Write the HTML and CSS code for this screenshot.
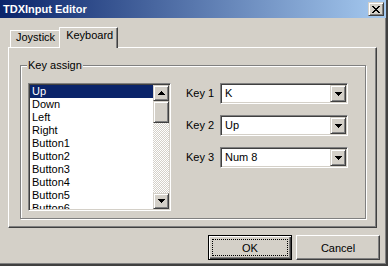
FILE: index.html
```html
<!DOCTYPE html>
<html>
<head>
  <title>TDXInput Editor</title>
  <link rel="stylesheet" href="styles.css">
</head>
<body>
  <div class="window">
    <div class="titlebar">
      <span class="title">TDXInput Editor</span>
      <button class="close-btn raised" title="Close">
        <svg width="8" height="7" viewBox="0 0 8 7">
          <path d="M0 0h2v1H0z M6 0h2v1H6z M1 1h2v1H1z M5 1h2v1H5z M2 2h4v1H2z M3 3h2v1H3z M2 4h4v1H2z M1 5h2v1H1z M5 5h2v1H5z M0 6h2v1H0z M6 6h2v1H6z" fill="#000"/>
        </svg>
      </button>
    </div>

    <div class="client">
      <!-- tab strip -->
      <div class="tabs">
        <div class="tab">Joystick</div>
        <div class="tab active">Keyboard</div>
      </div>

      <div class="tab-page">
        <fieldset class="group">
          <legend>Key assign</legend>
          <div class="group-body">
            <div class="listbox sunken">
              <ul class="list-items">
                <li class="selected">Up</li>
                <li>Down</li>
                <li>Left</li>
                <li>Right</li>
                <li>Button1</li>
                <li>Button2</li>
                <li>Button3</li>
                <li>Button4</li>
                <li>Button5</li>
                <li>Button6</li>
              </ul>
              <div class="scrollbar">
                <div class="scroll-btn raised">
                  <svg width="7" height="4" viewBox="0 0 7 4"><path d="M3 0h1v1H3z M2 1h3v1H2z M1 2h5v1H1z M0 3h7v1H0z" fill="#000"/></svg>
                </div>
                <div class="scroll-thumb raised"></div>
                <div class="scroll-track"></div>
                <div class="scroll-btn raised">
                  <svg width="7" height="4" viewBox="0 0 7 4"><path d="M0 0h7v1H0z M1 1h5v1H1z M2 2h3v1H2z M3 3h1v1H3z" fill="#000"/></svg>
                </div>
              </div>
            </div>

            <div class="key-list">
              <div class="key-row">
                <label>Key 1</label>
                <div class="combo sunken">
                  <span class="combo-value">K</span>
                  <span class="combo-btn raised">
                    <svg width="7" height="4" viewBox="0 0 7 4"><path d="M0 0h7v1H0z M1 1h5v1H1z M2 2h3v1H2z M3 3h1v1H3z" fill="#000"/></svg>
                  </span>
                </div>
              </div>
              <div class="key-row">
                <label>Key 2</label>
                <div class="combo sunken">
                  <span class="combo-value">Up</span>
                  <span class="combo-btn raised">
                    <svg width="7" height="4" viewBox="0 0 7 4"><path d="M0 0h7v1H0z M1 1h5v1H1z M2 2h3v1H2z M3 3h1v1H3z" fill="#000"/></svg>
                  </span>
                </div>
              </div>
              <div class="key-row">
                <label>Key 3</label>
                <div class="combo sunken">
                  <span class="combo-value">Num 8</span>
                  <span class="combo-btn raised">
                    <svg width="7" height="4" viewBox="0 0 7 4"><path d="M0 0h7v1H0z M1 1h5v1H1z M2 2h3v1H2z M3 3h1v1H3z" fill="#000"/></svg>
                  </span>
                </div>
              </div>
            </div>
          </div>
        </fieldset>
      </div>

      <div class="dialog-buttons">
        <button class="btn default"><span class="focus-rect">OK</span></button>
        <button class="btn">Cancel</button>
      </div>
    </div>
  </div>
</body>
</html>
```

FILE: styles.css
```css
body {
  margin: 0;
  background-color: #d4d0c8;
  font-family: "Liberation Sans", Arial, sans-serif;
  font-size: 11px;
  color: #000;
}

button {
  font: inherit;
  color: inherit;
  margin: 0;
  padding: 0;
  background-color: #d4d0c8;
}

/* shared 3D edges */
.raised {
  box-sizing: border-box;
  border: 1px solid;
  border-color: #d4d0c8 #404040 #404040 #d4d0c8;
  box-shadow: inset 1px 1px #fff, inset -1px -1px #808080;
  background-color: #d4d0c8;
}

.sunken {
  box-sizing: border-box;
  border: 1px solid;
  border-color: #808080 #fff #fff #808080;
  box-shadow: inset 1px 1px #404040, inset -1px -1px #d4d0c8;
  background-color: #fff;
}

.window {
  width: 388px;
  height: 266px;
  box-sizing: border-box;
  border-right: 2px solid #404040;
  border-bottom: 2px solid #404040;
  box-shadow: inset -1px -1px #808080;
  background-color: #d4d0c8;
}

.titlebar {
  height: 18px;
  display: flex;
  align-items: center;
  justify-content: space-between;
  padding: 0 2px 0 3px;
  background: linear-gradient(to right, #0a246a, #a6caf0);
  color: #fff;
}

.title {
  font-weight: bold;
  line-height: 18px;
}

.close-btn {
  width: 16px;
  height: 14px;
  display: flex;
  align-items: center;
  justify-content: center;
}

.client {
  padding: 9px 9px 0 8px;
}

/* tabs */
.tabs {
  display: flex;
  align-items: flex-end;
  height: 20px;
  margin-left: 2px;
}

.tab {
  box-sizing: border-box;
  height: 17px;
  line-height: 13px;
  padding: 0 5px;
  border-top: 1px solid #fff;
  border-left: 1px solid #fff;
  border-right: 1px solid #404040;
  box-shadow: inset -1px 0 #808080;
  background-color: #d4d0c8;
}

.tab.active {
  position: relative;
  z-index: 1;
  height: 21px;
  margin-bottom: -1px;
  margin-left: -2px;
  padding: 1px 4px 0 6px;
}

.tab-page {
  box-sizing: border-box;
  width: 369px;
  height: 181px;
  border: 1px solid;
  border-color: #fff #404040 #404040 #fff;
  box-shadow: inset -1px -1px #808080;
  padding: 11px 0 0 11px;
}

/* group box */
.group {
  box-sizing: border-box;
  width: 346px;
  height: 160px;
  margin: 0;
  padding: 11px 0 0 7px;
  min-width: 0;
  border: 1px solid #808080;
  box-shadow: inset 1px 1px #fff, 1px 1px #fff;
}

.group legend {
  padding: 0 1px;
  margin-left: -1px;
  line-height: 13px;
  background-color: #d4d0c8;
}

.group-body {
  display: flex;
  gap: 15px;
}

/* list box */
.listbox {
  width: 143px;
  height: 128px;
  padding: 1px;
  display: flex;
}

.list-items {
  flex: 1;
  margin: 0;
  padding: 0;
  list-style: none;
  overflow: hidden;
}

.list-items li {
  height: 13px;
  line-height: 13px;
  padding-left: 2px;
  white-space: nowrap;
}

.list-items li.selected {
  background-color: #0a246a;
  color: #fff;
}

.scrollbar {
  width: 16px;
  display: flex;
  flex-direction: column;
}

.scroll-btn {
  height: 16px;
  display: flex;
  align-items: center;
  justify-content: center;
}

.scroll-thumb {
  height: 22px;
}

.scroll-track {
  flex: 1;
  background: repeating-conic-gradient(#d4d0c8 0 25%, #fff 0 50%) 0 0 / 2px 2px;
}

/* key combos */
.key-list {
  display: flex;
  flex-direction: column;
  gap: 11px;
}

.key-row {
  display: flex;
  align-items: center;
}

.key-row label {
  width: 34px;
  line-height: 13px;
}

.combo {
  width: 128px;
  height: 21px;
  padding: 1px;
  display: flex;
  align-items: center;
}

.combo-value {
  flex: 1;
  padding-left: 3px;
  line-height: 13px;
}

.combo-btn {
  width: 16px;
  height: 17px;
  display: flex;
  align-items: center;
  justify-content: center;
}

/* OK / Cancel */
.dialog-buttons {
  display: flex;
  justify-content: flex-end;
  gap: 4px;
  margin: 7px -3px 0 0;
}

.btn {
  box-sizing: border-box;
  width: 84px;
  height: 25px;
  border: 1px solid;
  border-color: #fff #404040 #404040 #fff;
  box-shadow: inset -1px -1px #808080;
  display: flex;
  align-items: center;
  justify-content: center;
}

.btn.default {
  border: 1px solid #000;
  box-shadow: inset 1px 1px #fff, inset -1px -1px #404040, inset -2px -2px #808080;
  padding: 3px;
}

.focus-rect {
  flex: 1;
  align-self: stretch;
  border: 1px dotted #000;
  display: flex;
  align-items: center;
  justify-content: center;
}
```
